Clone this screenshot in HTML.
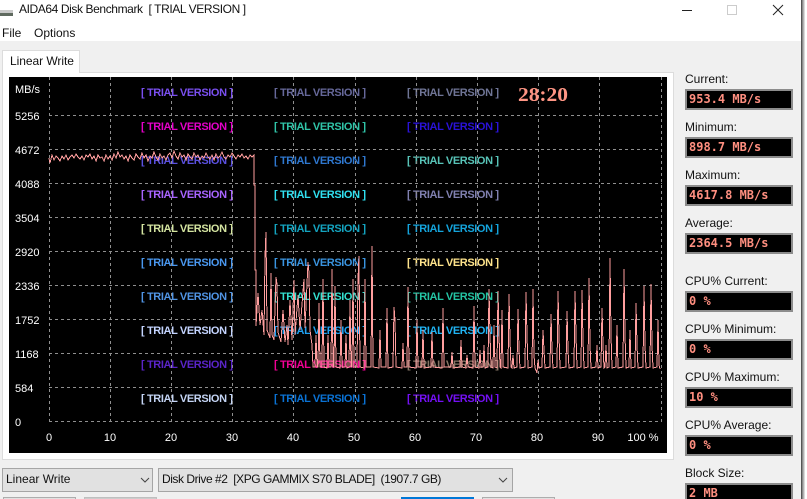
<!DOCTYPE html>
<html style="overflow:hidden;height:499px;width:807px"><head><meta charset="utf-8"><style>
html,body{margin:0;padding:0;background:#fff}
body{width:807px;height:499px;overflow:hidden;position:relative;font-family:"Liberation Sans",sans-serif;font-size:12px;color:#111}
#w{position:absolute;left:0;top:0;width:807px;height:499px;overflow:hidden}
.a{position:absolute;white-space:pre}
.lbl{position:absolute;left:685px;font-size:12px;line-height:14px;color:#111}
.box{position:absolute;left:685px;height:17px;background:#000;border:2px solid #8c8c8c;font:bold 12px/17px "DejaVu Sans Mono",monospace;color:#ff8f80;padding-left:2px;box-sizing:content-box;white-space:pre;width:102px}
.cb{position:absolute;top:468px;height:22px;background:#e1e1e1;border:1px solid #a5a5a5;line-height:20px;padding-left:3px;font-size:12px;color:#111;white-space:pre}
.btn{position:absolute;top:497px;height:2px;background:#e1e1e1;border:1px solid #adadad;border-bottom:0}
</style></head><body><div id="w">
<div class="a" style="left:0;top:41px;width:801px;height:458px;background:#f0f0f0"></div>
<div class="a" style="left:801px;top:0;width:1px;height:499px;background:#555"></div>
<div class="a" style="left:802px;top:0;width:3px;height:499px;background:linear-gradient(90deg,#777,#eee)"></div>
<div class="a" style="left:0;top:10px;width:13px;height:4px;background:#c9c9c9"></div>
<div class="a" style="left:0;top:13px;width:13px;height:3px;background:#5f6a5f"></div>
<div class="a" style="left:19px;top:2px;line-height:15px;font-size:12px;letter-spacing:-.4px">AIDA64 Disk Benchmark  [ TRIAL VERSION ]</div>
<div class="a" style="left:2px;top:26px;line-height:15px">File</div>
<div class="a" style="left:34px;top:26px;line-height:15px">Options</div>
<svg class="a" style="left:670px;top:0" width="131" height="24">
<path d="M12 10.5H22" stroke="#222" stroke-width="1" shape-rendering="crispEdges"/>
<rect x="57.5" y="5.5" width="9" height="9" fill="none" stroke="#ccc"/>
<path d="M103 5L113 15M113 5L103 15" stroke="#222" stroke-width="1" fill="none"/>
</svg>
<div class="a" style="left:2px;top:72px;width:670px;height:386px;background:#fff;border:1px solid #dcdcdc"></div>
<div class="a" style="left:2px;top:50px;width:78px;height:23px;background:#fff;border:1px solid #dcdcdc;border-bottom:0;box-sizing:border-box;line-height:21px;padding-left:7px;letter-spacing:-.05px">Linear Write</div>
<div class="a" style="left:9px;top:77px;width:658px;height:376px;background:#000"></div>
<svg class="a" style="left:0;top:0" width="807" height="499" font-family="Liberation Sans, sans-serif">
<g font-size="11" font-weight="bold" lengthAdjust="spacingAndGlyphs">
<text x="141" y="96" fill="#7a4ff0" textLength="92">[ TRIAL VERSION ]</text><text x="274" y="96" fill="#66689a" textLength="92">[ TRIAL VERSION ]</text><text x="407" y="96" fill="#6f7596" textLength="92">[ TRIAL VERSION ]</text>
<text x="141" y="130" fill="#e400c8" textLength="92">[ TRIAL VERSION ]</text><text x="274" y="130" fill="#30c4a8" textLength="92">[ TRIAL VERSION ]</text><text x="407" y="130" fill="#2a12d8" textLength="92">[ TRIAL VERSION ]</text>
<text x="141" y="164" fill="#5a50e0" textLength="92">[ TRIAL VERSION ]</text><text x="274" y="164" fill="#2f78d0" textLength="92">[ TRIAL VERSION ]</text><text x="407" y="164" fill="#58c4b8" textLength="92">[ TRIAL VERSION ]</text>
<text x="141" y="198" fill="#a864ff" textLength="92">[ TRIAL VERSION ]</text><text x="274" y="198" fill="#30e0f0" textLength="92">[ TRIAL VERSION ]</text><text x="407" y="198" fill="#8080b0" textLength="92">[ TRIAL VERSION ]</text>
<text x="141" y="232" fill="#d4e4a0" textLength="92">[ TRIAL VERSION ]</text><text x="274" y="232" fill="#14a4c0" textLength="92">[ TRIAL VERSION ]</text><text x="407" y="232" fill="#14a4dc" textLength="92">[ TRIAL VERSION ]</text>
<text x="141" y="266" fill="#4a98f0" textLength="92">[ TRIAL VERSION ]</text><text x="274" y="266" fill="#3a94e0" textLength="92">[ TRIAL VERSION ]</text><text x="407" y="266" fill="#ffe48c" textLength="92">[ TRIAL VERSION ]</text>
<text x="141" y="300" fill="#5094e4" textLength="92">[ TRIAL VERSION ]</text><text x="274" y="300" fill="#34e0d0" textLength="92">[ TRIAL VERSION ]</text><text x="407" y="300" fill="#24c4a4" textLength="92">[ TRIAL VERSION ]</text>
<text x="141" y="334" fill="#c4d4ff" textLength="92">[ TRIAL VERSION ]</text><text x="274" y="334" fill="#20a0f0" textLength="92">[ TRIAL VERSION ]</text><text x="407" y="334" fill="#20b4f4" textLength="92">[ TRIAL VERSION ]</text>
<text x="141" y="368" fill="#5a24c8" textLength="92">[ TRIAL VERSION ]</text><text x="274" y="368" fill="#f00094" textLength="92">[ TRIAL VERSION ]</text><text x="407" y="368" fill="#857464" textLength="92">[ TRIAL VERSION ]</text>
<text x="141" y="402" fill="#c4d4f4" textLength="92">[ TRIAL VERSION ]</text><text x="274" y="402" fill="#0a72d4" textLength="92">[ TRIAL VERSION ]</text><text x="407" y="402" fill="#7410f4" textLength="92">[ TRIAL VERSION ]</text>
</g>
<g stroke="#8f8f8f" stroke-width="1" stroke-dasharray="3 3" shape-rendering="crispEdges">
<path d="M49.5 77V422M110.5 77V422M171.5 77V422M232.5 77V422M293.5 77V422M355.5 77V422M416.5 77V422M477.5 77V422M538.5 77V422M599.5 77V422M661.5 77V422"/>
<path d="M49 115.5H662M49 149.5H662M49 183.5H662M49 217.5H662M49 251.5H662M49 285.5H662M49 319.5H662M49 353.5H662M49 387.5H662M49 421.5H662"/>
</g>
<path fill="none" stroke="#ff9e9e" stroke-width="1" shape-rendering="crispEdges" d="M49 158 50 163 52 155 54 160 56 156 58 158 60 161 62 156 64 159 66 155 68 160 70 157 72 155 74 158 76 154 78 157 80 159 82 156 84 160 86 155 88 157 90 154 92 159 94 156 96 161 98 155 100 158 102 157 104 161 106 155 108 159 110 156 112 160 114 154 116 158 118 152 120 157 122 155 124 159 126 156 128 161 130 155 132 158 134 160 136 154 138 157 140 159 142 153 144 158 146 155 148 161 150 156 152 158 154 152 156 157 158 160 160 154 162 158 164 156 166 160 168 155 170 153 172 158 174 151 176 156 178 159 180 153 182 157 184 155 186 160 188 154 190 157 192 159 194 153 196 157 198 155 200 160 202 156 204 158 206 153 208 157 210 159 212 155 214 160 216 154 218 158 220 156 222 152 224 157 226 159 228 155 230 157 232 153 234 156 236 159 238 155 240 157 242 154 244 158 246 156 248 159 250 155 252 157 254 155 254 185 255 185 255 270 256 270 256 326 258 293 260 325 262 310 264 335 265 257 266 232 267 330 270 338 271 273 272 335 274 340 276 277 277 284 278 332 281 342 283 310 285 342 287 325 288 345 290 300 292 340 294 280 295 335 298 295 300 330 304 279 305 328 308 262 309 273 310 330 312 345 313 367 315 367 316 335 317 367 318 367 319 303 320 367 322 367 323 279 324 367 327 368 328 335 329 367 331 367 332 269 333 367 334 367 335 286 336 367 340 368 341 320 342 367 345 367 346 335 347 368 349 367 350 300 351 367 352 367 353 279 354 367 357 367 358 279 359 256 360 367 364 368 365 279 366 367 371 367 372 246 373 367 379 368 380 330 381 367 386 367 387 308 388 368 393 367 394 307 395 320 396 367 402 368 403 343 404 367 407 367 408 287 409 367 416 368 417 320 418 367 422 367 423 330 424 368 431 367 432 332 433 367 442 368 443 308 444 367 451 367 452 352 453 368 460 367 461 340 462 367 466 368 467 355 468 367 473 368 474 306 475 367 479 368 480 350 481 367 483 367 484 345 485 368 488 367 489 289 490 335 491 367 493 368 494 325 495 367 497 368 498 291 499 335 500 367 501 368 502 310 503 367 508 368 509 294 510 340 511 367 512 368 513 355 514 368 517 367 518 309 519 350 520 368 525 367 526 292 527 335 528 368 532 367 533 289 534 355 535 368 537 373 538 360 539 368 542 367 543 330 544 350 545 368 550 367 551 314 552 350 553 368 557 367 558 291 559 335 560 368 566 367 567 311 568 350 569 368 574 367 575 291 576 335 577 368 581 367 582 290 583 340 584 368 588 367 589 278 590 345 591 368 596 367 597 345 598 368 601 367 602 308 603 345 604 368 605 367 606 345 607 368 609 367 610 258 611 335 612 368 616 367 617 325 618 368 623 367 624 269 625 335 626 368 629 367 630 330 631 368 635 367 636 303 637 345 638 368 643 367 644 286 645 345 646 368 650 367 651 284 652 345 653 368 657 367 658 320 659 365 660 369"/>
<g fill="#fff" font-size="11">
<text x="15" y="93">MB/s</text>
<text x="15" y="120">5256</text><text x="15" y="154">4672</text><text x="15" y="188">4088</text><text x="15" y="222">3504</text><text x="15" y="256">2920</text><text x="15" y="290">2336</text><text x="15" y="324">1752</text><text x="15" y="358">1168</text><text x="15" y="392">584</text><text x="15" y="426">0</text>
<g text-anchor="middle">
<text x="49" y="441">0</text><text x="110" y="441">10</text><text x="171" y="441">20</text><text x="232" y="441">30</text><text x="293" y="441">40</text><text x="354" y="441">50</text><text x="415" y="441">60</text><text x="476" y="441">70</text><text x="537" y="441">80</text><text x="598" y="441">90</text><text x="643" y="441">100 %</text>
</g></g>
<text x="518" y="101" font-family="Liberation Serif, serif" font-weight="bold" font-size="20" fill="#ff9584" textLength="50" lengthAdjust="spacingAndGlyphs">28:20</text>
</svg>
<div class="lbl" style="top:72px">Current:</div><div class="box" style="top:89px">953.4 MB/s</div>
<div class="lbl" style="top:120px">Minimum:</div><div class="box" style="top:137px">898.7 MB/s</div>
<div class="lbl" style="top:168px">Maximum:</div><div class="box" style="top:185px">4617.8 MB/s</div>
<div class="lbl" style="top:216px">Average:</div><div class="box" style="top:233px">2364.5 MB/s</div>
<div class="lbl" style="top:274px">CPU% Current:</div><div class="box" style="top:291px">0 %</div>
<div class="lbl" style="top:322px">CPU% Minimum:</div><div class="box" style="top:339px">0 %</div>
<div class="lbl" style="top:370px">CPU% Maximum:</div><div class="box" style="top:387px">10 %</div>
<div class="lbl" style="top:418px">CPU% Average:</div><div class="box" style="top:435px">0 %</div>
<div class="lbl" style="top:466px">Block Size:</div><div class="box" style="top:483px">2 MB</div>
<div class="cb" style="left:2px;width:146px">Linear Write</div>
<div class="cb" style="left:158px;width:350px;letter-spacing:-.45px">Disk Drive #2  [XPG GAMMIX S70 BLADE]  (1907.7 GB)</div>
<svg class="a" style="left:0;top:468px" width="520" height="24"><path d="M141 10L145 14L149 10M499 10L503 14L507 10" fill="none" stroke="#444"/></svg>
<div class="btn" style="left:3px;width:71px"></div>
<div class="btn" style="left:84px;width:71px;background:#ccc;border-color:#bfbfbf"></div>
<div class="btn" style="left:401px;width:69px;border:2px solid #0078d7;border-bottom:0"></div>
<div class="btn" style="left:482px;width:71px"></div>
</div></body></html>
